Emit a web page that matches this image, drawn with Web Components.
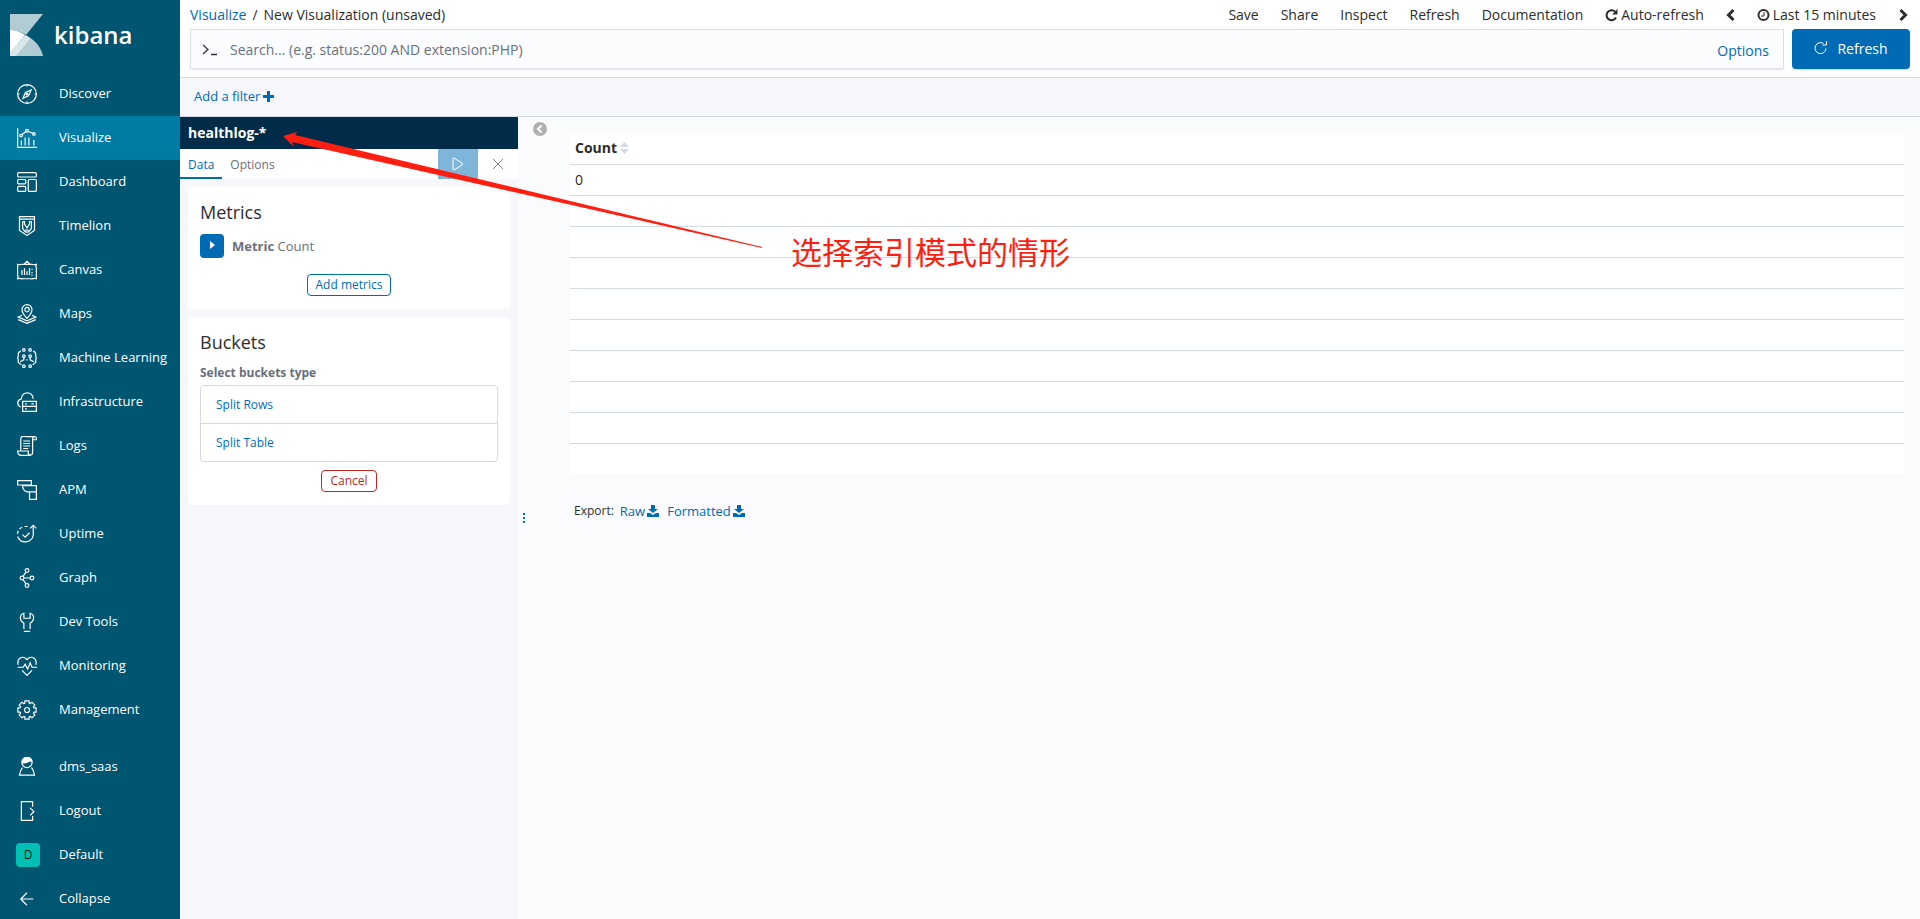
<!DOCTYPE html>
<html lang="en">
<head>
<meta charset="utf-8">
<title>Kibana</title>
<style>
html,body{margin:0;height:100%;background:#fafbfd}
body{font-family:"Open Sans","Noto Sans CJK SC",sans-serif;font-size:14px;color:#2d2d2d;overflow:hidden}
</style>
</head>
<body>
<kbn-app></kbn-app>
<script>
const define = (name, css, html, after) => customElements.define(name, class extends HTMLElement {
  constructor() {
    super();
    const t = document.createElement('template');
    t.innerHTML = `<style>*{box-sizing:border-box}svg{display:block;flex:none}button,input{font:inherit}a{color:#006bb4;text-decoration:none}${css}</style>` + html;
    this.attachShadow({mode: 'open'}).appendChild(t.content.cloneNode(true));
  }
  connectedCallback() { if (after) after.call(this, this.shadowRoot); }
});

/* Outline of a gear with eight teeth, centred on the 32-unit grid */
const gearPoints = Array.from({length: 8}, (_, k) => [[-13, 15], [13, 15], [17, 11.5], [28, 11.5]].map(([a, r]) => {
  const t = (k * 45 + a) * Math.PI / 180;
  return (16 + r * Math.sin(t)).toFixed(1) + ',' + (16 - r * Math.cos(t)).toFixed(1);
}).join(' ')).join(' ');

/* Line icons on a 32-unit grid */
const icons = {
  compass: '<circle cx="16" cy="16" r="15"/><path d="M16 1v3M16 28v3M1 16h3M28 16h3M22.500 9.500l-4 9.500-9 4 4-9.500z"/><circle cx="16" cy="16" r="1.500"/>',
  visualize: '<path d="M1 0v31h31M7 20v8M13 15v13M19 15v13M27 19v9"/><path d="M8 10.500l6-4.500M18.500 5.500l6.500 3"/><circle cx="6.500" cy="12" r="2"/><circle cx="16" cy="4.500" r="2.200"/><circle cx="27" cy="9.500" r="2"/>',
  dashboard: '<rect x="1" y="1" width="30" height="7" rx="2"/><rect x="1" y="12" width="13" height="7" rx="2"/><rect x="1" y="23" width="13" height="8" rx="2"/><rect x="18" y="12" width="13" height="19" rx="2"/>',
  timelion: '<path d="M3 1h26M4 1v22l12 8 12-8V1M4 5h24M9 9v11l5 6M9 9h3v4l4 6 4-6V9h3v11l-5 6"/><circle cx="16" cy="24" r="2"/>',
  canvas: '<path d="M11 7l5-5 5 5M1 7c4 2 6-1 9 0h12c3-1 5 2 9 0-2 4 1 5 0 8s1 5 0 8 1 4 0 7c-4-2-6 1-9 0H10c-3 1-5-2-9 0 2-4-1-5 0-8s-1-5 0-8-1-4 0-7zM8 16v8M12 13v11M16 18v6M20 13v11M24 14v2M24 19v2M24 23v2"/>',
  maps: '<path d="M16 23c-4-5-8-9-8-14a8 8 0 0 1 16 0c0 5-4 9-8 14z"/><circle cx="16" cy="9" r="3.500"/><path d="M8 18l-6 3 14 6 14-6-6-3M2 25l14 6 14-6"/>',
  ml: '<circle cx="11" cy="3" r="2"/><circle cx="21" cy="3" r="2"/><circle cx="11" cy="13" r="2"/><circle cx="21" cy="13" r="2"/><circle cx="11" cy="29" r="2"/><circle cx="21" cy="29" r="2"/><path d="M6 5c-3 1-4 3-4 5v3l-1 3 1 3v4l5 4M26 5c3 1 4 3 4 5v3l1 3-1 3v4l-5 4M11 15v4l-6 3M21 15v4l6 3M16 18v2"/>',
  infra: '<path d="M6 24c-7-3-6-11 1-13C8-2 25-2 26 11M9 15h22v8H9zM9 23h22v8H9zM13 19h3M13 27h3M23 19h4"/>',
  logs: '<path d="M6 24V5c0-6 5-4 9-4h13c4 0 3 5 3 5h-6M25 6v20c0 6-6 5-7 2v-4H1c0 6 3 7 6 7h15M28 1c-3 0-3 2-3 5M10 8h11M10 12h11M10 16h11M10 20h8"/>',
  apm: '<path d="M1 1h22v7H1zM23 9h8v10H18c-5 0-8-3-9-8v-2h14M20 20v11h11V19"/>',
  uptime: '<path d="M26 2v16A13 13 0 0 1 1 20M21 7l5-5 5 5M1 16c0-2 0-3 1-5M4 8l4-3M12 4h5M9 17l4 4 7-7"/>',
  graph: '<circle cx="16" cy="4" r="3"/><circle cx="8" cy="16" r="3"/><circle cx="24" cy="16" r="3"/><circle cx="16" cy="28" r="3"/><path d="M14 7l-4 6M10 19l4 6M11 16h10"/>',
  wrench: '<path d="M11 31h10M11 27V18C3 13 4 4 11 2v8h10V2c7 2 8 11 0 16v9"/>',
  monitor: '<path d="M2 14C-1 5 8-1 14 4l2 2 2-2c6-5 15 1 12 10M1 18h9l3-5 4 8 4-10 3 7h8M8 23l8 8 8-8"/>',
  gear: `<polygon stroke-linejoin="round" points="${gearPoints}"/><circle cx="16" cy="16" r="4"/>`,
  user: '<path d="M8 9a8 8 0 1 0 16 0a8 8 0 1 0-16 0M9 17c-3 3-4 7-5 12h24c-1-5-2-9-5-12"/><path fill="#fff" d="M8 9C8-2 23-2 24 7c-5-3-7 4-16 2z"/>',
  logout: '<path d="M25 9V1H7v30h18v-7M21 11l6 6-6 6"/>',
  arrow: '<path d="M26 16H7M16 6L6 16l10 10"/>'
};
const icon = (n) => `<svg width="20" height="20" viewBox="0 0 32 32" fill="none" stroke="currentColor" stroke-width="1.900" aria-hidden="true">${icons[n]}</svg>`;

define('nav-item', `
:host{display:block}
a{display:flex;align-items:center;height:44px;padding-left:16px;color:#fff;font-size:13px;line-height:20px}
:host([active]) a{background:#007ba4}
.i{width:24px;margin-right:19px;display:flex;justify-content:center}
.i svg{margin-right:2px}
.t{padding-bottom:2px}
.d{flex:none;width:24px;height:24px;border-radius:4px;background:#00bfb3;color:#1a1a1a;font-size:12px;line-height:24px;text-align:center}
`, `<a href="#"><span class="i"></span><span class="t"><slot></slot></span></a>`, function (r) {
  const n = this.getAttribute('icon');
  r.querySelector('.i').innerHTML = n === 'space' ? '<span class="d">D</span>' : icon(n);
});

define('kbn-nav', `
:host{display:block;width:180px;height:100vh;flex:none;background:#005571;overflow:hidden}
.logo{display:flex;height:72px;padding:14px 0 0 10px;color:#fff;gap:11px;font-size:24px;font-weight:600;line-height:32px}
.logo span{padding-top:5px}
.user{margin-top:13px}
`, `<a class="logo" href="#"><svg width="33" height="42" viewBox="0 0 33 42"><path fill="#b2ccd4" d="M0 0h33L16 21C11 18 6 16 0 16z"/><path fill="#fff" d="M0 16c6 0 11 2 15 5L0 39z"/><path fill="#b2ccd4" d="M16 21c9 5 15 12 17 21H5z"/><path fill="#d9e6ea" d="M15 21l5 4L6 42H0v-4z"/></svg><span>kibana</span></a>
<nav>
<nav-item icon="compass">Discover</nav-item><nav-item icon="visualize" active>Visualize</nav-item><nav-item icon="dashboard">Dashboard</nav-item><nav-item icon="timelion">Timelion</nav-item><nav-item icon="canvas">Canvas</nav-item><nav-item icon="maps">Maps</nav-item><nav-item icon="ml">Machine Learning</nav-item><nav-item icon="infra">Infrastructure</nav-item><nav-item icon="logs">Logs</nav-item><nav-item icon="apm">APM</nav-item><nav-item icon="uptime">Uptime</nav-item><nav-item icon="graph">Graph</nav-item><nav-item icon="wrench">Dev Tools</nav-item><nav-item icon="monitor">Monitoring</nav-item><nav-item icon="gear">Management</nav-item>
</nav><div class="user"><nav-item icon="user">dms_saas</nav-item><nav-item icon="logout">Logout</nav-item><nav-item icon="space">Default</nav-item><nav-item icon="arrow">Collapse</nav-item></div>`);

define('kbn-header', `
:host{display:block;background:#fff;border-bottom:1px solid #d3dae6;padding:0 10px 8px}
.top{display:flex;justify-content:space-between;align-items:flex-start;height:29px;line-height:20px;padding-top:5px}
.crumbs{display:flex;gap:6px}
.menu{display:flex;gap:22px;padding-right:2px}
.menu a{color:#2d2d2d;display:flex;align-items:center;gap:3px}
.menu a.prev,.menu a.next{width:9px}
.menu a.next{margin-left:1px}
.q{display:flex;gap:8px;height:40px}
.box{flex:1;display:flex;align-items:center;border:1px solid #dde0e6;background:#fbfcfd;box-shadow:0 2px 2px -1px #98a2b34d;padding:0 14px 0 11px}
.box a{padding-top:2px}
input{flex:1;border:0;background:none;outline:0;padding:0;margin-left:12px;height:36px;color:#343741}
input::placeholder{color:#69707d;opacity:1}
button{width:118px;border:0;border-radius:4px;background:#006bb4;color:#fff;display:flex;align-items:center;justify-content:center;gap:9px;padding:0 6px 2px;box-shadow:0 2px 2px -1px #366e9b4d}
`, `<div class="top"><div class="crumbs"><a href="#">Visualize</a><span>/</span><span>New Visualization (unsaved)</span></div>
<nav class="menu"><a href="#">Save</a><a href="#">Share</a><a href="#">Inspect</a><a href="#">Refresh</a><a href="#">Documentation</a>
<a href="#"><svg width="13" height="14" viewBox="0 0 13 14"><path d="M11 9.500A5 5 0 1 1 10 3.500" fill="none" stroke="currentColor" stroke-width="2"/><path d="M12.500 1v5.500H7z" fill="currentColor"/></svg>Auto-refresh</a>
<a class="prev" href="#" aria-label="Back"><svg width="9" height="14" viewBox="0 0 9 14"><path d="M7.500 2l-5 5 5 5" fill="none" stroke="currentColor" stroke-width="3"/></svg></a>
<a href="#"><svg width="13" height="14" viewBox="0 0 13 14"><circle cx="6.500" cy="7" r="5" fill="none" stroke="currentColor" stroke-width="2"/><path d="M7 4v4H4" fill="none" stroke="currentColor"/></svg>Last 15 minutes</a>
<a class="next" href="#" aria-label="Forward"><svg width="9" height="14" viewBox="0 0 9 14"><path d="M1.500 2l5 5-5 5" fill="none" stroke="currentColor" stroke-width="3"/></svg></a></nav></div>
<div class="q"><div class="box"><svg width="16" height="16" viewBox="0 0 16 16" fill="none" stroke="#343741" stroke-width="1.300"><path d="M1 4l5 4.500L1 13M9 13.500h6"/></svg><input aria-label="Search" placeholder="Search... (e.g. status:200 AND extension:PHP)"><a href="#">Options</a></div>
<button><svg width="14" height="14" viewBox="0 0 14 14" fill="none" stroke="#fff"><path d="M12 7.500A5.500 5.500 0 1 1 9.500 2.500M12.500 0v4H8.500"/></svg>Refresh</button></div>`);

define('filter-bar', `
:host{display:flex;align-items:center;height:39px;padding:0 14px 2px;background:#f5f7fa;border-bottom:1px solid #d3dae6;font-size:13px;box-sizing:border-box}
a{display:flex;align-items:center;gap:3px}
`, `<a href="#">Add a filter<svg width="11" height="11" viewBox="0 0 11 11"><path d="M4 0h3v4h4v3H7v4H4V7H0V4h4z" fill="currentColor"/></svg></a>`);

define('editor-panel', `
:host{display:block;background:#fff;border-radius:4px;padding:12px}
h2{margin:0 0 8px;font-size:18px;line-height:27px;font-weight:400;color:#2d2d2d}
`, `<h2><slot name="title"></slot></h2><slot></slot>`);

define('vis-editor', `
:host{display:block;width:338px;flex:none;background:#f5f7fa}
h1{margin:0;height:32px;padding-left:8px;background:#002b49;color:#fff;font-size:14px;line-height:32px;font-weight:700}
.tabs{display:flex;height:30px;background:#fff;font-size:12px;line-height:32px}
.tabs a{padding:0 8px;color:#69707d}
.tabs a.on{color:#006bb4;border-bottom:2px solid #006bb4}
.tabs button{width:40px;border:0;background:none;padding:0;display:flex;align-items:center;justify-content:center}
.tabs .play{margin-left:auto;background:#7fb5d9}
.panels{display:flex;flex-direction:column;gap:8px;padding:8px}
.metric{display:flex;align-items:center;gap:8px;height:24px;font-size:13px;color:#69707d;margin-bottom:16px}
.metric span{padding-bottom:1px}
.metric button{width:24px;height:24px;border:0;border-radius:4px;background:#006bb4;padding:0 0 2px;display:flex;align-items:center;justify-content:center}
.act{display:flex;justify-content:center;margin-bottom:1px}
.act button{height:22px;padding:0 8px;border:1px solid #006bb4;border-radius:4px;background:#fff;color:#006bb4;font-size:12px;line-height:20px}
.act .no{border-color:#bd271e;color:#bd271e}
h3{margin:0 0 3px;font-size:12px;line-height:18px;color:#69707d}
ul{list-style:none;margin:0 0 8px;padding:0;border:1px solid #d3dae6;border-radius:4px;font-size:12px}
li{padding-left:15px;height:37px;line-height:37px}
li+li{height:38px;border-top:1px solid #d3dae6}
`, `<h1>healthlog-*</h1><div class="tabs"><a class="on" href="#">Data</a><a href="#">Options</a><button class="play" aria-label="Apply changes"><svg width="12" height="14" viewBox="0 0 12 14"><path d="M1 2v10q0 1 1 1l8-5q1-1 0-2L2 1Q1 1 1 2z" fill="none" stroke="#fff"/></svg></button><button aria-label="Discard changes"><svg width="12" height="12" viewBox="0 0 12 12"><path d="M1 1l10 10M11 1L1 11" stroke="#7d8592"/></svg></button></div>
<div class="panels"><editor-panel><span slot="title">Metrics</span><div class="metric"><button aria-label="Expand metric"><svg width="5" height="8" viewBox="0 0 5 8"><path d="M0 0l5 4-5 4z" fill="#fff"/></svg></button><span><b>Metric</b> Count</span></div><div class="act"><button>Add metrics</button></div></editor-panel>
<editor-panel><span slot="title">Buckets</span><h3>Select buckets type</h3><ul><li><a href="#">Split Rows</a></li><li><a href="#">Split Table</a></li></ul><div class="act"><button class="no">Cancel</button></div></editor-panel></div>`);

define('vis-table', `
:host{display:block}
table{width:100%;border-collapse:collapse;background:#fff;line-height:20px}
th,td{height:31px;padding:0 5px;text-align:left;border-bottom:1px solid #d3dae6}
tr:last-child td{border-bottom:0}
th span{display:flex;align-items:center;gap:3px}
.ex{display:flex;gap:8px;font-size:13px;line-height:20px;margin:27px 0 0 4px}
.ex span{font-size:12px;margin-right:-2px}
.ex a{display:flex;align-items:center;gap:2px}
`, `<table><thead><tr><th><span>Count<svg width="9" height="12" viewBox="0 0 9 12"><path d="M0 5l4.500-5L9 5zM0 7l4.500 5L9 7z" fill="#d3dae6"/></svg></span></th></tr></thead><tbody><tr><td>0</td></tr></tbody></table>
<div class="ex"><span>Export:</span><a href="#">Raw</a><a href="#">Formatted</a></div>`, (r) => {
  const body = r.querySelector('tbody');
  for (let i = 0; i < 9; i++) body.insertAdjacentHTML('beforeend', '<tr><td></td></tr>');
  r.querySelectorAll('.ex a').forEach((a) => a.insertAdjacentHTML('beforeend', '<svg width="12" height="12" viewBox="0 0 12 12" fill="currentColor"><path d="M4 0h4v4h3L6 8 1 4h3zM0 8h3l3 2 3-2h3v4H0z"/></svg>'));
});

/* Callout drawn over the page: a tapering arrow and its caption */
define('callout-note', `
:host{position:absolute;left:280px;top:128px;color:#ff1f11;pointer-events:none}
svg{position:absolute;left:0;top:0}
p{margin:0;position:absolute;left:511px;top:100px;font-family:"Noto Sans CJK SC",sans-serif;font-size:31px;line-height:46px;white-space:nowrap}
`, `<svg width="484" height="122" viewBox="0 0 484 122"><path fill="currentColor" d="M3 8l14-4-2 3 467 112v1L12 14l2 5z"/></svg><p><slot></slot></p>`);

define('kbn-app', `
:host{display:flex;height:100vh}
main{flex:1;min-width:0;display:flex;flex-direction:column}
.work{flex:1;display:flex;min-height:0}
.drag{flex:none;width:12px;border:0;background:none;padding:0;display:flex;align-items:center;justify-content:center}
.side{flex:none;width:40px;padding:5px 0 0 3px}
.side button{display:block;border:0;background:none;padding:0}
vis-table{flex:1;margin:16px 16px 0 0}
`, `<kbn-nav></kbn-nav><main><kbn-header></kbn-header><filter-bar></filter-bar><div class="work"><vis-editor></vis-editor><button class="drag" aria-label="Resize"><svg width="3" height="10" viewBox="0 0 3 10" fill="#006bb4"><path d="M0 0h2v2H0zM0 4h2v2H0zM0 8h2v2H0z"/></svg></button><div class="side"><button aria-label="Collapse editor"><svg width="14" height="14" viewBox="0 0 14 14"><circle cx="7" cy="7" r="7" fill="#b0b0b0"/><path d="M8.500 3.500L5 7l3.500 3.500" fill="none" stroke="#fff" stroke-width="2"/></svg></button></div><vis-table></vis-table></div></main><callout-note lang="zh">选择索引模式的情形</callout-note>`);
</script>
</body>
</html>
